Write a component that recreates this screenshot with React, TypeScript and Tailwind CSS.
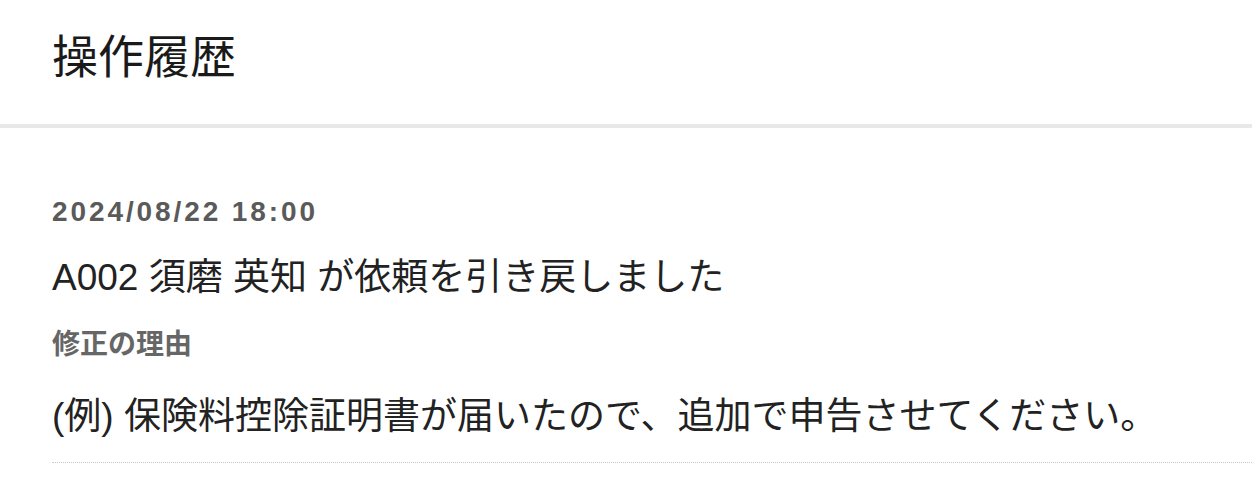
import React from "react";

const FONT = {
  fontFamily: '"Liberation Sans", "Noto Sans CJK JP", sans-serif',
};

type HistoryItem = {
  at: string;
  message: string;
  reasonLabel: string;
  reason: string;
};

const items: HistoryItem[] = [
  {
    at: "2024/08/22 18:00",
    message: "A002 須磨 英知 が依頼を引き戻しました",
    reasonLabel: "修正の理由",
    reason: "(例) 保険料控除証明書が届いたので、追加で申告させてください。",
  },
];

function HistoryRow({ item }: { item: HistoryItem }) {
  return (
    <div className="border-b border-dotted border-[#c9c9c9] pb-[21px]">
      <p className="mt-[64px] text-[28px] font-bold leading-[40px] tracking-[2.9px] text-[#5a5a5a]">
        {item.at}
      </p>
      <p className="mt-[22px] text-[37px] leading-[48px] text-[#222222]">{item.message}</p>
      <p className="mt-[23px] text-[28px] font-bold leading-[40px] text-[#666666]">
        {item.reasonLabel}
      </p>
      <p className="mt-[28px] text-[37px] leading-[48px] text-[#222222]">{item.reason}</p>
    </div>
  );
}

export default function App() {
  return (
    <div className="min-h-[498px] w-full bg-white" style={FONT}>
      {/* ── header ── */}
      <div className="flex h-[128px] items-center border-b-4 border-[#e8e8e8] pb-[10px] pl-[52px]">
        <h1 className="text-[46px] font-normal leading-none text-[#1a1a1a]">操作履歴</h1>
      </div>

      {/* ── history list ── */}
      <div className="pl-[52px]">
        {items.map((item) => (
          <HistoryRow key={item.at} item={item} />
        ))}
      </div>
    </div>
  );
}
